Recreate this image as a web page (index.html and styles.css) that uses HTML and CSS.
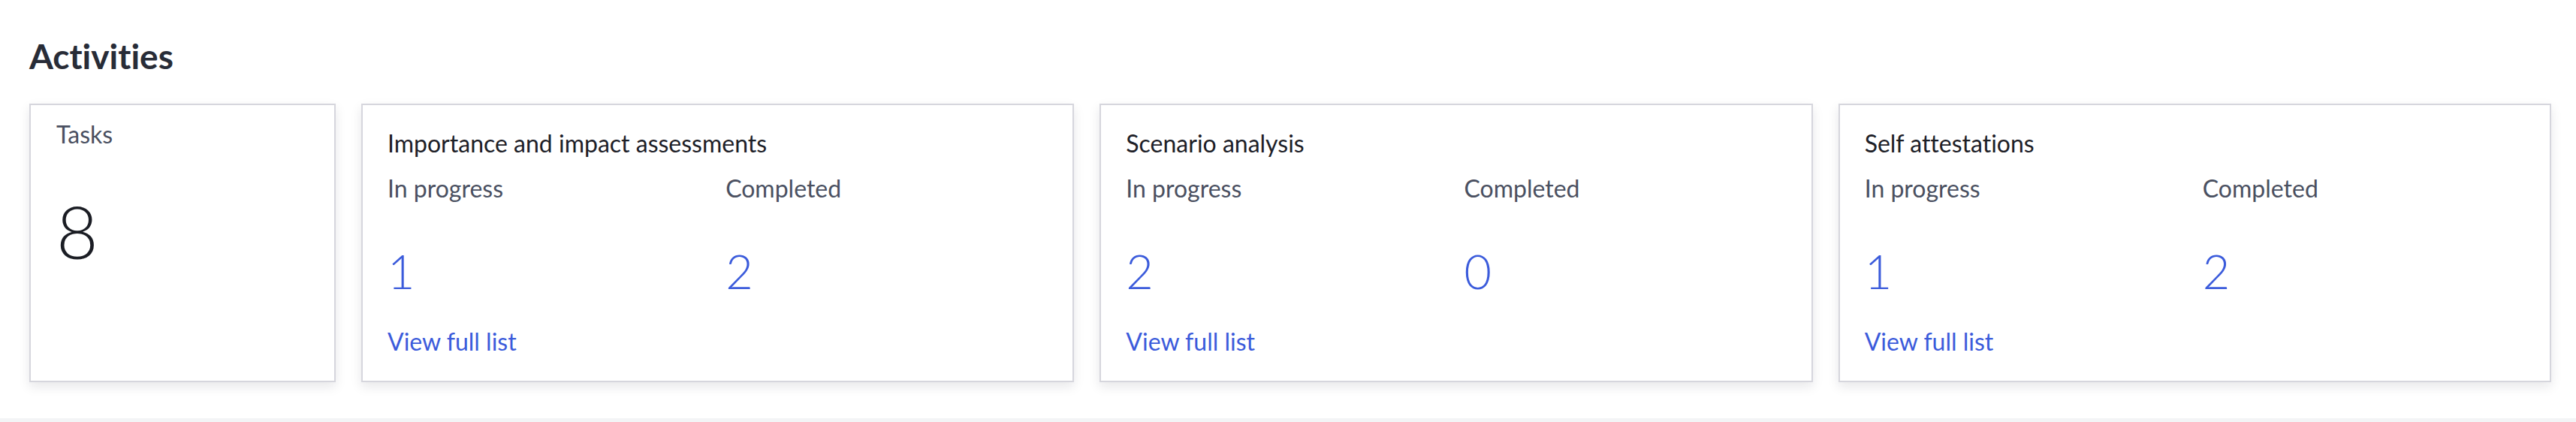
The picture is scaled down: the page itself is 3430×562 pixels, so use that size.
FILE: index.html
```html
<!DOCTYPE html>
<html lang="en">
<head>
<meta charset="utf-8">
<title>Activities</title>
<link rel="stylesheet" href="styles.css">
</head>
<body>
<section class="activities">
  <h2 class="activities__title">Activities</h2>
  <div class="activities__row">
    <div class="card card--tasks">
      <div class="card__label">Tasks</div>
      <div class="card__big">8</div>
    </div>
    <div class="card">
      <div class="card__title">Importance and impact assessments</div>
      <div class="stats">
        <div class="stat">
          <div class="card__label">In progress</div>
          <div class="stat__num">1</div>
        </div>
        <div class="stat">
          <div class="card__label">Completed</div>
          <div class="stat__num">2</div>
        </div>
      </div>
      <a class="card__link" href="#">View full list</a>
    </div>
    <div class="card">
      <div class="card__title">Scenario analysis</div>
      <div class="stats">
        <div class="stat">
          <div class="card__label">In progress</div>
          <div class="stat__num">2</div>
        </div>
        <div class="stat">
          <div class="card__label">Completed</div>
          <div class="stat__num">0</div>
        </div>
      </div>
      <a class="card__link" href="#">View full list</a>
    </div>
    <div class="card">
      <div class="card__title">Self attestations</div>
      <div class="stats">
        <div class="stat">
          <div class="card__label">In progress</div>
          <div class="stat__num">1</div>
        </div>
        <div class="stat">
          <div class="card__label">Completed</div>
          <div class="stat__num">2</div>
        </div>
      </div>
      <a class="card__link" href="#">View full list</a>
    </div>
  </div>
</section>
<div class="page-bottom"></div>
</body>
</html>
```

FILE: styles.css
```css
html, body {
  margin: 0;
  padding: 0;
}
body {
  background: #f3f4f6;
  font-family: Lato, "Open Sans", "Liberation Sans", sans-serif;
  font-variant-ligatures: none;
  font-feature-settings: "liga" 0, "clig" 0, "dlig" 0;
  color: #1d2027;
}
.activities {
  background: #ffffff;
  padding: 47px 33px 48px 39px;
}
.activities__title {
  margin: 0 0 36px 0;
  font-size: 46px;
  line-height: 55px;
  font-weight: 700;
  color: #282c37;
}
.activities__row {
  display: flex;
  gap: 34px;
  align-items: stretch;
}
.card {
  flex: 1 1 0;
  background: #ffffff;
  border: 2px solid #d6d6dd;
  box-shadow: 0 6px 14px rgba(20, 20, 40, 0.10);
  padding: 31.5px 33px 33px 33px;
  display: flex;
  flex-direction: column;
}
.card--tasks {
  flex: 0 0 408px;
  box-sizing: border-box;
  padding: 19.5px 33px 33px 34px;
}
.card__label {
  font-size: 32px;
  line-height: 38.4px;
  color: #4a5061;
}
.card__title {
  font-size: 32px;
  line-height: 38.4px;
  color: #1d2027;
  margin-bottom: 21.6px;
}
.card__big {
  margin-top: 52px;
  font-size: 96px;
  line-height: 115.2px;
  font-weight: 300;
  color: #1b1d24;
}
.stats {
  display: grid;
  grid-template-columns: 1fr 1fr;
  column-gap: 21px;
}
.stat__num {
  margin-top: 53px;
  font-size: 63px;
  line-height: 75.6px;
  font-weight: 300;
  color: #3b5bdb;
}
.card__link {
  margin-top: 37px;
  font-size: 32px;
  line-height: 38.4px;
  color: #3b5bdb;
  text-decoration: none;
  align-self: flex-start;
}
.page-bottom {
  height: 20px;
  background: #f3f4f6;
}
```
